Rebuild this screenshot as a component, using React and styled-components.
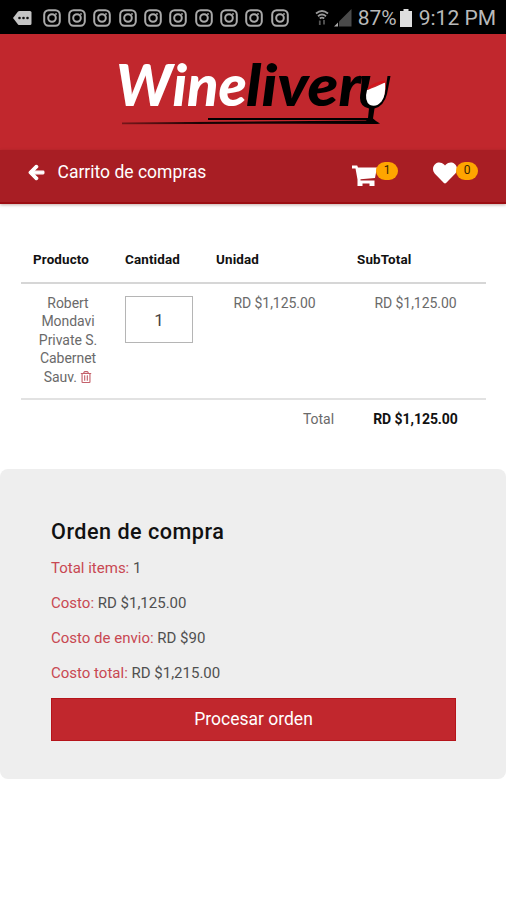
import React, { useState } from 'react';
import styled, { createGlobalStyle } from 'styled-components';
import { FaArrowLeft, FaHeart, FaRegTrashAlt } from 'react-icons/fa';

const GlobalStyle = createGlobalStyle`
  * {
    box-sizing: border-box;
  }

  body {
    margin: 0;
    background: #fff;
    font-family: Roboto, sans-serif;
  }
`;

const Page = styled.div`
  width: 506px;
  height: 900px;
  overflow: hidden;
  background: #fff;
`;

const StatusBar = styled.div`
  height: 34px;
  background: #000;
  color: #b9b9b9;
  display: flex;
  align-items: center;
  padding: 2px 10px 0 13px;
`;

const Notifications = styled.div`
  display: flex;
  align-items: center;
  gap: 7.35px;
  margin-left: 10.5px;
`;

const Indicators = styled.div`
  display: flex;
  align-items: center;
  margin-left: auto;
  font-size: 21px;
  line-height: 32px;
  white-space: nowrap;
`;

const Signal = styled.svg`
  margin: 0 6px 0 5px;
`;

const Battery = styled.svg`
  margin: 0 7px 0 3px;
`;

const Brand = styled.header`
  height: 116px;
  background: #c1272d;
  padding: 14px 0 0 110px;
`;

const LogoSvg = styled.svg`
  display: block;
`;

const TitleBar = styled.nav`
  height: 54px;
  background: #a81e24;
  border-bottom: 2px solid #9c0d12;
  box-shadow: 0 1px 3px rgba(80, 20, 10, 0.35);
  color: #fff;
  display: flex;
  align-items: flex-start;
  padding: 10px 28px 0 28px;
`;

const BackButton = styled.button`
  border: 0;
  padding: 0;
  background: none;
  color: inherit;
  display: flex;
  align-items: center;
  gap: 12.5px;
  height: 24px;
  font: 400 17.5px/24px Roboto, sans-serif;
`;

const BackArrow = styled(FaArrowLeft)`
  overflow: visible;
  stroke: #fff;
  stroke-width: 34px;
`;

const Shortcut = styled.div`
  display: flex;
  align-items: flex-start;
  margin-left: ${({ $first }) => ($first ? 'auto' : '35px')};

  svg {
    margin-top: ${({ $drop }) => $drop}px;
  }
`;

const Badge = styled.span`
  width: 22px;
  height: 18px;
  margin: 2px 0 0 -1px;
  border-radius: 9px;
  background: #ffa500;
  color: #3a2400;
  font-size: 12px;
  line-height: 16px;
  text-align: center;
`;

const CartTable = styled.section`
  margin: 31px 20px 0 21px;
  color: #6a6a6a;
  font-size: 14px;
  letter-spacing: -0.05px;
`;

const Row = styled.div`
  display: grid;
  grid-template-columns: 92px 91px 141px 141px;
`;

const HeadRow = styled(Row)`
  height: 49px;
  padding-top: 15px;
  border-bottom: 2px solid #d6d6d6;
`;

const HeadCell = styled.div`
  padding-left: 12px;
  color: #111;
  font-weight: 700;
  font-size: 13.4px;
  line-height: 20px;
  letter-spacing: 0.15px;
`;

const ItemRow = styled(Row)`
  height: 116px;
  padding-top: 10px;
  border-bottom: 2px solid #e2e2e2;
`;

const Cell = styled.div`
  padding: 0 12px;
  text-align: center;
  line-height: 18.4px;
`;

const ProductCell = styled(Cell)`
  padding: 0 11px 0 13px;
`;

const Quantity = styled.input`
  display: block;
  width: 68px;
  height: 47px;
  margin-top: 2px;
  padding: 0;
  border: 1px solid #b5b5b5;
  background: #fff;
  color: #444;
  font: 400 17px Roboto, sans-serif;
  text-align: center;
  outline: none;
`;

const Trash = styled(FaRegTrashAlt)`
  color: #c4616b;
  vertical-align: -1px;
`;

const TotalRow = styled(Row)`
  padding-top: 10px;
`;

const TotalLabel = styled.div`
  grid-column: 1 / 4;
  padding-right: 11px;
  text-align: right;
  line-height: 18px;
`;

const TotalValue = styled.div`
  color: #111;
  font-weight: 700;
  line-height: 18px;
  text-align: center;
`;

const OrderPanel = styled.section`
  height: 310px;
  margin-top: 41px;
  padding: 49px 50px 0 51px;
  border-radius: 8px;
  background: #eee;
`;

const OrderTitle = styled.h2`
  margin: 0 0 5px;
  color: #111;
  font-size: 21.6px;
  font-weight: 500;
  line-height: 28px;
  letter-spacing: 0.5px;
`;

const OrderLine = styled.p`
  margin: 0;
  color: #505050;
  font-size: 15px;
  line-height: 35.1px;
`;

const Label = styled.span`
  color: #c84852;
`;

const ProcessButton = styled.button`
  display: block;
  width: 405px;
  height: 43px;
  margin-top: 6.6px;
  padding: 0 0 1px;
  border: 1px solid #b5141a;
  background: #c1272d;
  color: #fff;
  font: 400 17.5px Roboto, sans-serif;
`;

const MessageIcon = () => (
  <svg width="19" height="16" viewBox="0 0 19 16">
    <path d="M0 8 L5 1.5 Q5.600 1 6.500 1 H17 Q18.500 1 18.500 2.500 V13.500 Q18.500 15 17 15 H6.500 Q5.600 15 5 14.500 Z" fill="#c4c4c4" />
    <circle cx="6.500" cy="8" r="1.300" fill="#111" />
    <circle cx="10.500" cy="8" r="1.300" fill="#111" />
    <circle cx="14.500" cy="8" r="1.300" fill="#111" />
  </svg>
);

const InstagramIcon = () => (
  <svg width="18" height="18" viewBox="0 0 18 18" fill="none" stroke="#a9a9a9" strokeWidth="2">
    <rect x="1.200" y="1.200" width="15.600" height="15.600" rx="4.500" />
    <circle cx="9" cy="9" r="3.800" />
    <circle cx="13" cy="5" r="0.600" strokeWidth="1" />
  </svg>
);

const WifiIcon = () => (
  <svg width="14" height="18" viewBox="0 0 14 18" fill="none" stroke="#999" strokeWidth="1.800">
    <path d="M1 4.500 Q7 -0.500 13 4.500" />
    <path d="M3 7.200 Q7 3.800 11 7.200" />
    <path d="M4.800 9.500 Q7 7.700 9.200 9.500" />
    <path d="M4.800 11.500 V16 M9 11 V15.500" stroke="#555" />
  </svg>
);

const SignalIcon = () => (
  <Signal width="18" height="18" viewBox="0 0 18 18">
    <path d="M17.500 0 V17.500 H5 V12.500 Z" fill="#4a4a4a" />
    <path d="M4 13.500 V17.500 H0 Z" fill="#aaa" />
  </Signal>
);

const CartIcon = () => (
  <svg width="25" height="22" viewBox="0 0 25 22">
    <path d="M0 0.500 H5.200 L6 2.500 H25 L23 13 L8.500 14.200 V15.500 H22.500 V21 H17.500 V18.500 H10.500 V21 H5.500 V14.500 L3.500 3.500 H0 Z" fill="#fff" />
  </svg>
);

const Logo = () => (
  <LogoSvg width="290" height="84" viewBox="110 48 290 84">
    <defs>
      <linearGradient id="stroke" x1="0" x2="1">
        <stop offset="0" stopColor="#2a0506" stopOpacity="0.500" />
        <stop offset="0.300" stopColor="#1a0304" />
        <stop offset="1" stopColor="#000" />
      </linearGradient>
    </defs>
    <g fontFamily="Lato, sans-serif" fontStyle="italic" fontWeight="900">
      <text x="116" y="105.500" fontSize="57" fill="#fff" textLength="131" lengthAdjust="spacingAndGlyphs">Wine</text>
      <text x="246" y="105.500" fontSize="58" fill="#000" textLength="115" lengthAdjust="spacingAndGlyphs">liver</text>
    </g>
    <path d="M362 76 H370.500 L367.500 90 L370 104 Q382 105 385 93 L387.500 76 H390.500 L387 94 Q384 106 374.500 108.500 L373 118.500 Q376 121.500 380 123.500 H360 Q367.500 121 368 118 L369 108.500 Q360 106.500 360 98 Q360 95 361 90 Z" fill="#000" />
    <path d="M367 90 Q376 87 385 82.500 Q386 96 381.500 101.500 Q376.500 107.500 370 105 Q364 101 367 90 Z" fill="#fff" />
    <path d="M368 89 Q374 83 385 81.500" stroke="#d4141b" strokeWidth="2" fill="none" />
    <path d="M208 118 H368 L370 120 H208 Z" fill="#000" />
    <path d="M122 122.500 L370 120.500 L380 124 Q300 123.500 122 124.200 Z" fill="url(#stroke)" />
  </LogoSvg>
);

const items = [
  { id: 1, name: 'Robert Mondavi Private S. Cabernet Sauv.', unit: 'RD $1,125.00', subtotal: 'RD $1,125.00' },
];

const summary = [
  { label: 'Total items:', value: '1' },
  { label: 'Costo:', value: 'RD $1,125.00' },
  { label: 'Costo de envio:', value: 'RD $90' },
  { label: 'Costo total:', value: 'RD $1,215.00' },
];

const App = () => {
  const [quantity, setQuantity] = useState('1');

  return (
    <>
      <GlobalStyle />
      <Page>
        <StatusBar>
          <MessageIcon />
          <Notifications>
            {Array.from({ length: 10 }, (_, i) => (
              <InstagramIcon key={i} />
            ))}
          </Notifications>
          <Indicators>
            <WifiIcon />
            <SignalIcon />
            <span>87%</span>
            <Battery width="12" height="18" viewBox="0 0 12 18">
              <path d="M3.500 0 H8.500 V2 H12 V18 H0 V2 H3.500 Z" fill="#dedede" />
            </Battery>
            <span>9:12 PM</span>
          </Indicators>
        </StatusBar>
        <Brand>
          <Logo />
        </Brand>
        <TitleBar>
          <BackButton>
            <BackArrow size={17} />
            Carrito de compras
          </BackButton>
          <Shortcut $first $drop={5}>
            <CartIcon />
            <Badge>1</Badge>
          </Shortcut>
          <Shortcut $drop={1}>
            <FaHeart size={24} />
            <Badge>0</Badge>
          </Shortcut>
        </TitleBar>
        <CartTable>
          <HeadRow>
            <HeadCell>Producto</HeadCell>
            <HeadCell>Cantidad</HeadCell>
            <HeadCell>Unidad</HeadCell>
            <HeadCell>SubTotal</HeadCell>
          </HeadRow>
          {items.map((item) => (
            <ItemRow key={item.id}>
              <ProductCell>
                {item.name} <Trash size={12} />
              </ProductCell>
              <Cell>
                <Quantity value={quantity} onChange={(e) => setQuantity(e.target.value)} />
              </Cell>
              <Cell>{item.unit}</Cell>
              <Cell>{item.subtotal}</Cell>
            </ItemRow>
          ))}
          <TotalRow>
            <TotalLabel>Total</TotalLabel>
            <TotalValue>RD $1,125.00</TotalValue>
          </TotalRow>
        </CartTable>
        <OrderPanel>
          <OrderTitle>Orden de compra</OrderTitle>
          {summary.map((line) => (
            <OrderLine key={line.label}>
              <Label>{line.label}</Label> {line.value}
            </OrderLine>
          ))}
          <ProcessButton>Procesar orden</ProcessButton>
        </OrderPanel>
      </Page>
    </>
  );
};

export default App;
